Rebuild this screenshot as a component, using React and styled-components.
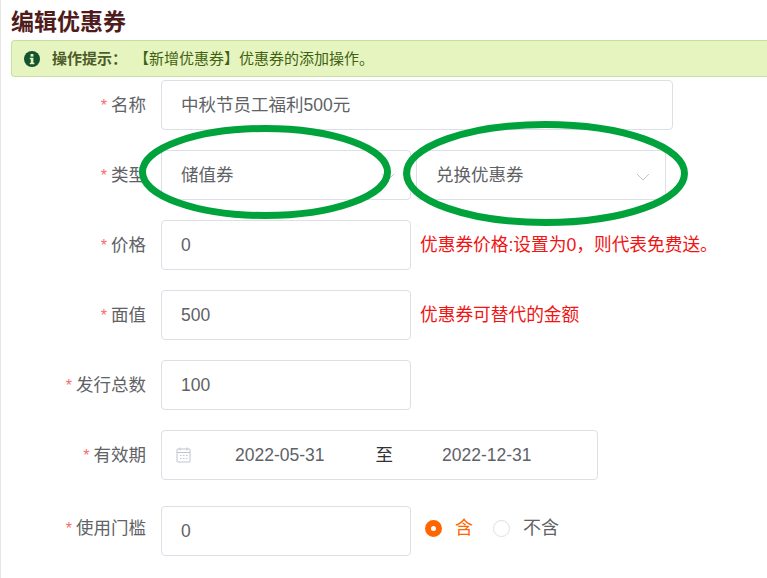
import React from "react";
import styled, { createGlobalStyle } from "styled-components";

const GlobalStyle = createGlobalStyle`
  html, body {
    margin: 0;
    padding: 0;
    background: #fff;
    overflow: hidden;
  }
  body {
    font-family: "Liberation Sans", "Noto Sans CJK SC", sans-serif;
  }
`;

const Page = styled.div`
  position: relative;
  width: 767px;
  height: 578px;
  overflow: hidden;
  border-left: 1px solid #e6e6e6;
  box-sizing: border-box;
  padding-left: 10px;
`;

const Title = styled.h2`
  margin: 0;
  height: 40px;
  padding-top: 9px;
  box-sizing: border-box;
  font-size: 23px;
  line-height: 26px;
  font-weight: 700;
  color: #4f1c1c;
`;

const Alert = styled.div`
  display: flex;
  align-items: center;
  height: 37px;
  line-height: 20px;
  box-sizing: border-box;
  margin-right: -10px;
  padding-left: 12px;
  background: #e6f4bf;
  border: 1px solid #c5e0a5;
  border-right: none;
  border-radius: 4px 0 0 4px;
  font-size: 15px;
  color: #3f6212;
`;

const AlertIcon = styled.svg`
  width: 16px;
  height: 16px;
  margin-right: 12px;
  flex: none;
`;

const AlertLabel = styled.b`
  color: #4d5c2a;
  margin-right: 7px;
`;

const Form = styled.form`
  display: flex;
  flex-direction: column;
  padding-top: 3px;
`;

const Row = styled.div`
  display: flex;
  align-items: center;
  height: 50px;
  margin-bottom: ${(p) => p.$gap || 20}px;
`;

const Label = styled.label`
  width: 135px;
  flex: none;
  text-align: right;
  font-size: 17.5px;
  line-height: 20px;
  color: #606266;
  margin-right: 15px;
  margin-bottom: ${(p) => (p.$raised ? 6 : 0)}px;
  white-space: nowrap;
`;

const Star = styled.span`
  color: #f56c6c;
  font-size: 16px;
  margin-right: 4px;
`;

const Field = styled.div`
  position: relative;
  display: flex;
  align-items: center;
  width: ${(p) => p.$width || 250}px;
  height: 50px;
  box-sizing: border-box;
  flex: none;
  margin-left: ${(p) => p.$left || 0}px;
  padding-left: 19px;
  background: #fff;
  border: 1px solid #dcdfe6;
  border-radius: 4px;
  font-size: 17.5px;
  line-height: 20px;
  color: #606266;
`;

const Chevron = styled.svg`
  position: absolute;
  right: 15px;
  top: 50%;
  width: 14px;
  height: 8px;
  margin-top: -2px;
  color: #c0c4cc;
`;

const Hint = styled.span`
  margin-left: 9px;
  font-size: 17.7px;
  line-height: 20px;
  color: #f01414;
  white-space: nowrap;
`;

const DateIcon = styled.svg`
  width: 15px;
  height: 16px;
  margin-left: -5px;
  flex: none;
  color: #c0c4cc;
`;

const DateValue = styled.span`
  margin-left: ${(p) => p.$left}px;
  font-size: 17.5px;
  white-space: nowrap;
`;

const DateSep = styled.span`
  margin-left: 51px;
  font-size: 17.5px;
  color: #303133;
`;

const Radio = styled.span`
  display: inline-flex;
  align-items: center;
  margin-left: ${(p) => p.$left}px;
  margin-bottom: 6px;
  font-size: 18px;
  line-height: 20px;
  color: ${(p) => (p.$checked ? "#ff6600" : "#606266")};
`;

const RadioDot = styled.span`
  display: inline-block;
  width: 17px;
  height: 17px;
  box-sizing: border-box;
  margin-right: 13px;
  border-radius: 50%;
  background: #fff;
  border: ${(p) => (p.$checked ? "6px solid #ff6600" : "1px solid #dcdfe6")};
`;

const Circles = styled.svg`
  position: absolute;
  left: 0;
  top: 0;
  width: 767px;
  height: 578px;
  pointer-events: none;
`;

const FormRow = ({ label, children, gap, raised }) => (
  <Row $gap={gap}>
    <Label $raised={raised}>
      <Star>*</Star>
      {label}
    </Label>
    {children}
  </Row>
);

const App = () => {
  return (
    <Page>
      <GlobalStyle />
      <Title>编辑优惠券</Title>
      <Alert>
        <AlertIcon viewBox="0 0 16 16">
          <circle cx="8" cy="8" r="8" fill="#14532d" />
          <rect x="6.6" y="3" width="2.8" height="2.6" fill="#e6f4bf" />
          <path d="M5.8 6.8h3.6v5h1v1.4H5.8v-1.4h1v-3.6h-1z" fill="#e6f4bf" />
        </AlertIcon>
        <AlertLabel>操作提示：</AlertLabel>
        【新增优惠券】优惠券的添加操作。
      </Alert>
      <Form>
        <FormRow label="名称">
          <Field $width={512}>中秋节员工福利500元</Field>
        </FormRow>
        <FormRow label="类型">
          <Field>
            储值券
            <Chevron viewBox="0 0 14 8">
              <path d="M1 1l6 6 6-6" fill="none" stroke="currentColor" />
            </Chevron>
          </Field>
          <Field $left={5}>
            兑换优惠券
            <Chevron viewBox="0 0 14 8">
              <path d="M1 1l6 6 6-6" fill="none" stroke="currentColor" />
            </Chevron>
          </Field>
        </FormRow>
        <FormRow label="价格">
          <Field>0</Field>
          <Hint>优惠券价格:设置为0，则代表免费送。</Hint>
        </FormRow>
        <FormRow label="面值">
          <Field>500</Field>
          <Hint>优惠券可替代的金额</Hint>
        </FormRow>
        <FormRow label="发行总数">
          <Field>100</Field>
        </FormRow>
        <FormRow label="有效期" gap={26}>
          <Field $width={437}>
            <DateIcon viewBox="0 0 15 16">
              <path
                d="M1.5 2h12a.5.5 0 0 1 .5.5v12a.5.5 0 0 1-.5.5h-12a.5.5 0 0 1-.5-.5v-12a.5.5 0 0 1 .5-.5zM1 5.5h13M4 .5v3M11 .5v3"
                fill="none"
                stroke="currentColor"
              />
              <path
                d="M4 8h1.5v1H4zM7 8h1.5v1H7zM10 8h1.5v1H10zM4 11h1.5v1H4zM7 11h1.5v1H7zM10 11h1.5v1H10z"
                fill="currentColor"
              />
            </DateIcon>
            <DateValue $left={44}>2022-05-31</DateValue>
            <DateSep>至</DateSep>
            <DateValue $left={49}>2022-12-31</DateValue>
          </Field>
        </FormRow>
        <FormRow label="使用门槛" raised>
          <Field>0</Field>
          <Radio $left={14} $checked>
            <RadioDot $checked />含
          </Radio>
          <Radio $left={20}>
            <RadioDot />不含
          </Radio>
        </FormRow>
      </Form>
      <Circles viewBox="0 0 767 578">
        <ellipse cx="264" cy="172" rx="122.5" ry="43.5" fill="none" stroke="#00a23c" strokeWidth="7" />
        <ellipse cx="544.5" cy="173.5" rx="139" ry="49" fill="none" stroke="#00a23c" strokeWidth="7" />
      </Circles>
    </Page>
  );
};

export default App;
